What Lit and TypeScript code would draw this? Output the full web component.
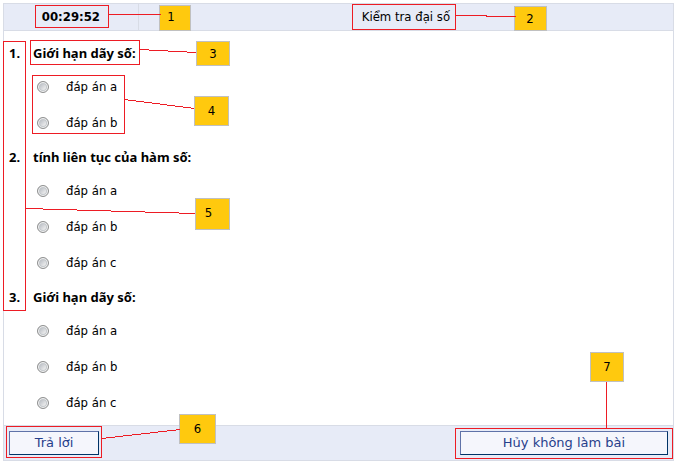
import { LitElement, html, svg, css } from "lit";
import { customElement, state } from "lit/decorators.js";
import { classMap } from "lit/directives/class-map.js";
import { styleMap } from "lit/directives/style-map.js";

interface Question {
  title: string;
  answers: string[];
}

/** A box or badge: left, top, width, height. Left is measured from the layer's origin. */
type Rect = [number, number, number, number];

interface Callout {
  label: number;
  frame: Rect;
  badge: Rect;
  points: string;
  early?: boolean;
}

const QUESTIONS: Question[] = [
  { title: "Giới hạn dãy số:", answers: ["đáp án a", "đáp án b"] },
  { title: "tính liên tục của hàm số:", answers: ["đáp án a", "đáp án b", "đáp án c"] },
  { title: "Giới hạn dãy số:", answers: ["đáp án a", "đáp án b", "đáp án c"] },
];

/** Callouts grouped by the edge of the page that their targets follow. */
const LAYERS: { name: string; callouts: Callout[] }[] = [
  {
    name: "from-left",
    callouts: [
      { label: 1, frame: [35, 5, 74, 23], badge: [159, 5, 32, 26], points: "108,14 160,14", early: true },
      { label: 3, frame: [30, 40, 110, 25], badge: [196, 41, 34, 25], points: "139,49 196,52" },
      { label: 4, frame: [32, 75, 93, 59], badge: [194, 96, 35, 30], points: "124,99 194,108" },
      { label: 5, frame: [3, 41, 23, 270], badge: [195, 198, 35, 32], points: "25,208 195,213", early: true },
      { label: 6, frame: [6, 426, 96, 32], badge: [179, 414, 37, 30], points: "101,438 180,429" },
    ],
  },
  {
    name: "from-title",
    callouts: [
      { label: 2, frame: [-54, 4, 104, 26], badge: [108, 6, 33, 25], points: "49,15 80,15 80,16 109,16" },
    ],
  },
  {
    name: "from-right",
    callouts: [
      { label: 7, frame: [-219, 428, 218, 31], badge: [-84, 352, 34, 30], points: "-68,381 -68,428" },
    ],
  },
];

@customElement("callout-layer")
class CalloutLayer extends LitElement {
  static properties = { callouts: { attribute: false } };
  declare callouts: Callout[];

  static styles = css`
    :host {
      display: block;
      width: 0;
      height: 0;
      pointer-events: none;
    }
    .lines {
      position: absolute;
      left: 0;
      top: 0;
      width: 1px;
      height: 1px;
      overflow: visible;
      fill: none;
      stroke: #ed1c24;
      stroke-width: 1;
      shape-rendering: crispEdges;
    }
    .frame,
    .badge {
      position: absolute;
      box-sizing: border-box;
    }
    .frame {
      border: 1px solid #ed1c24;
    }
    .badge {
      display: flex;
      align-items: center;
      justify-content: center;
      border: 1px solid #c0c0c0;
      background: #ffc90e;
      color: #000;
    }
    .early {
      padding: 0 8px 2px 0;
    }
  `;

  render() {
    const box = ([x, y, w, h]: Rect) =>
      styleMap({ left: `${x}px`, top: `${y}px`, width: `${w}px`, height: `${h}px` });
    return html`
      ${this.callouts.map(
        (c) => html`
          <div class="frame" style=${box(c.frame)}></div>
          <div class=${classMap({ badge: true, early: !!c.early })} style=${box(c.badge)}>${c.label}</div>
        `
      )}
      <svg class="lines" aria-hidden="true">
        <g transform="translate(0.5 0.5)">
          ${this.callouts.map((c) => svg`<polyline points=${c.points}></polyline>`)}
        </g>
      </svg>
    `;
  }
}

@customElement("app-root")
class AppRoot extends LitElement {
  @state() private remaining = "00:29:52";

  static styles = css`
    :host {
      display: block;
      position: relative;
      box-sizing: border-box;
      padding: 3px 7px 5px 3px;
      background: #fff;
      color: #000;
      font: 13px/16px "DejaVu Sans Condensed", "DejaVu Sans", sans-serif;
      font-stretch: condensed;
    }
    .quiz {
      border: 1px solid #d8dce6;
    }
    .bar {
      display: flex;
      background: #e7ebf7;
    }
    .top {
      height: 26px;
      align-items: stretch;
      border-bottom: 1px solid #d8dce6;
    }
    .time,
    .name {
      display: flex;
      align-items: center;
      justify-content: center;
      margin: 0;
      font-size: 13px;
    }
    .time {
      flex: 0 0 20%;
      font-weight: bold;
      border-right: 1px solid #d8dce6;
    }
    .name {
      flex: 1;
      font-weight: normal;
    }
    .questions {
      list-style: none;
      margin: 0;
      padding: 6px 5px 4px;
    }
    .question {
      margin: 0;
      padding: 0;
      border: 0;
    }
    .heading {
      display: flex;
      align-items: center;
      height: 32px;
      padding: 0;
      font-family: "Noto Sans", sans-serif;
      font-stretch: normal;
      font-weight: bold;
    }
    .number {
      width: 24px;
    }
    .answer {
      display: flex;
      align-items: center;
      height: 36px;
      padding-left: 28px;
      gap: 17px;
    }
    .radio {
      appearance: none;
      box-sizing: border-box;
      width: 12px;
      height: 12px;
      margin: 0;
      border: 1px solid #8e8f8f;
      border-radius: 50%;
      background: linear-gradient(135deg, #b4b9c0 15%, #f0f0f0 75%);
      box-shadow: inset 0 0 0 1px #f4f4f4, inset 0 0 0 2px #c4c8cc;
    }
    .radio:checked {
      background: radial-gradient(#1c3f6e 35%, #e8eaec 45%);
    }
    .bottom {
      justify-content: space-between;
      padding: 5px;
      border-top: 1px solid #d8dce6;
    }
    .button {
      box-sizing: border-box;
      height: 24px;
      padding: 0;
      border: 1px solid;
      border-color: #5f72a8 #003366 #003366 #5f72a8;
      background: #f5f6fc;
      color: #27408b;
      font: 13px/16px "DejaVu Sans", sans-serif;
    }
    .submit {
      width: 90px;
    }
    .cancel {
      width: 208px;
    }
    .from-left,
    .from-title,
    .from-right {
      position: absolute;
      top: 0;
    }
    .from-left {
      left: 0;
    }
    .from-title {
      left: 60%;
      margin-left: -3px;
    }
    .from-right {
      left: 100%;
      margin-left: -7px;
    }
  `;

  render() {
    return html`
      <form class="quiz" @submit=${(e: Event) => e.preventDefault()}>
        <header class="bar top">
          <div class="time" role="timer">${this.remaining}</div>
          <h1 class="name">Kiểm tra đại số</h1>
        </header>
        <ol class="questions">
          ${QUESTIONS.map(
            (q, i) => html`
              <li>
                <fieldset class="question">
                  <legend class="heading"><span class="number">${i + 1}.</span>${q.title}</legend>
                  ${q.answers.map(
                    (a) => html`
                      <label class="answer">
                        <input class="radio" type="radio" name="question-${i + 1}" .value=${a} />
                        <span>${a}</span>
                      </label>
                    `
                  )}
                </fieldset>
              </li>
            `
          )}
        </ol>
        <footer class="bar bottom">
          <button class="button submit" type="submit">Trả lời</button>
          <button class="button cancel" type="button">Hủy không làm bài</button>
        </footer>
      </form>
      ${LAYERS.map((l) => html`<callout-layer class=${l.name} .callouts=${l.callouts}></callout-layer>`)}
    `;
  }
}
